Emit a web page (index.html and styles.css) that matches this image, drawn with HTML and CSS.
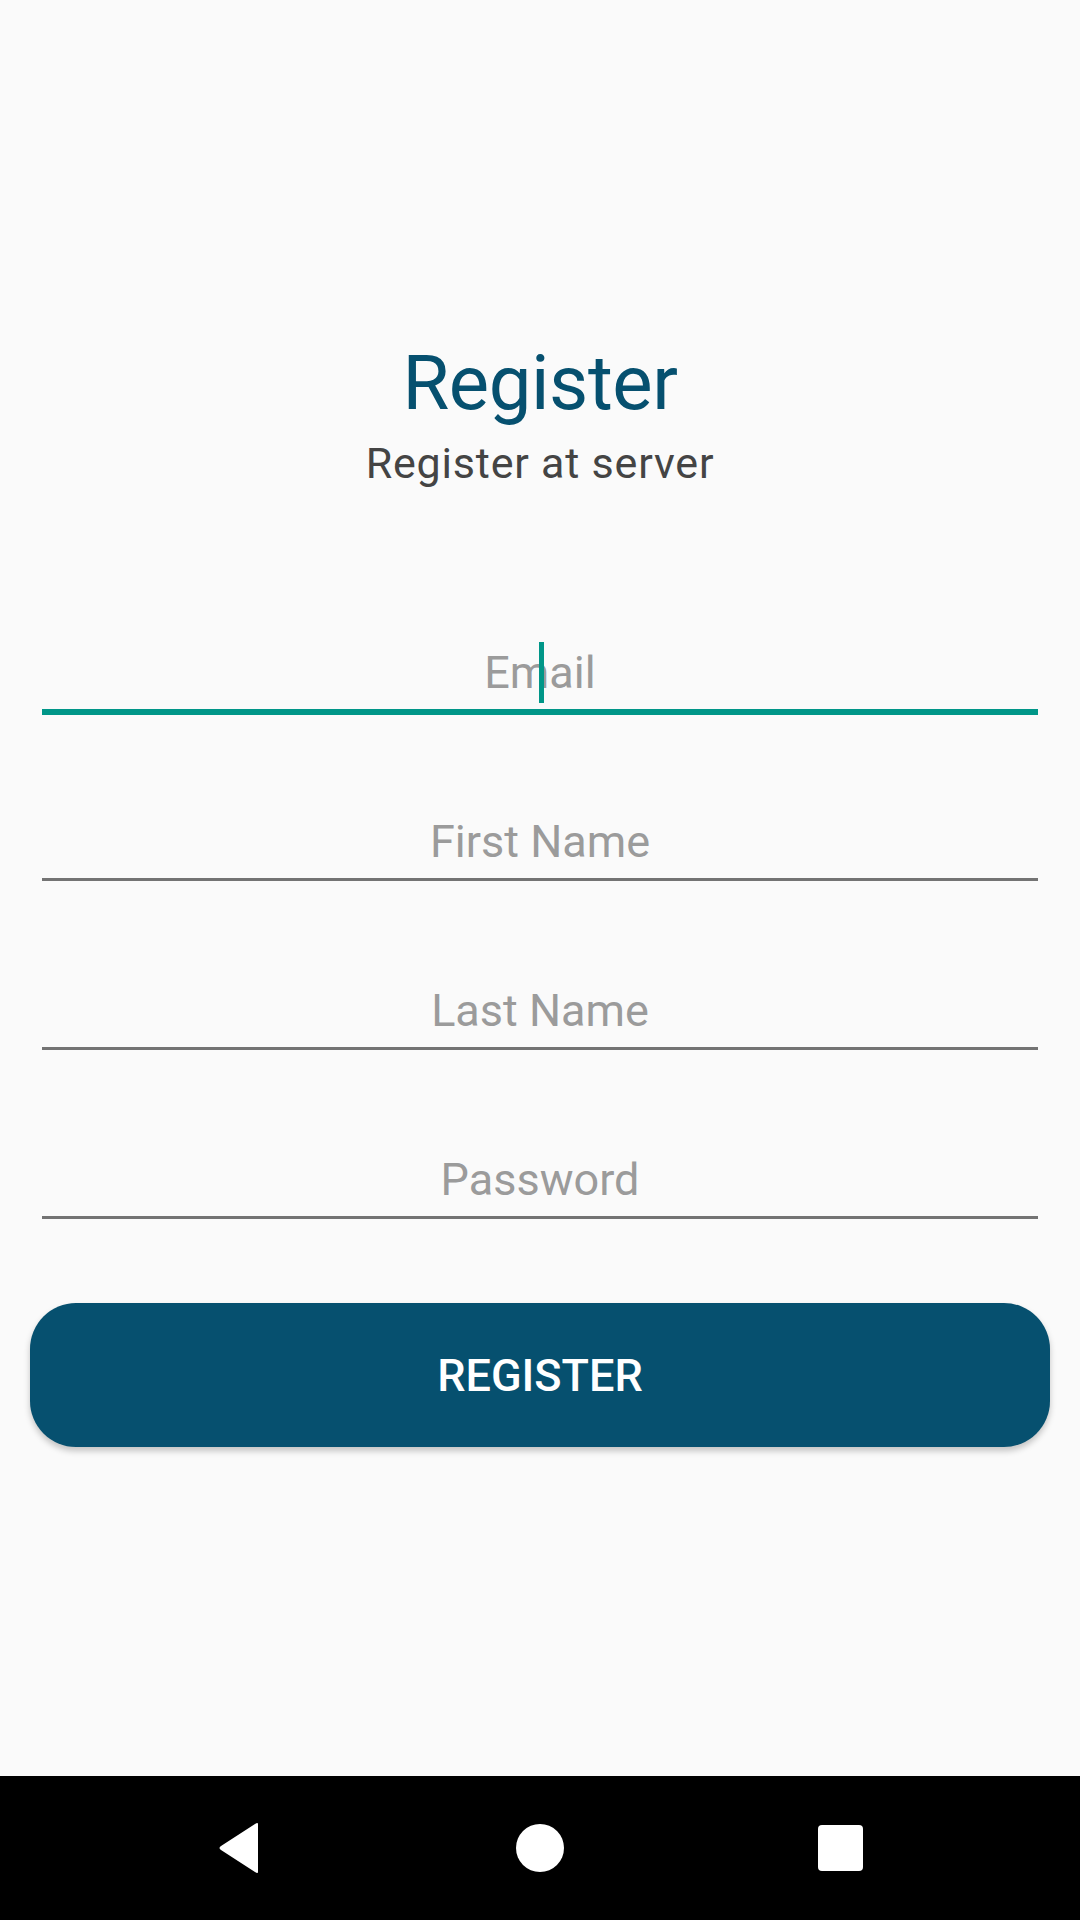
FILE: index.html
```html
<!DOCTYPE html>
<html lang="en">
<head>
<meta charset="utf-8">
<title>Register</title>
<link rel="stylesheet" href="styles.css">
</head>
<body>
<div class="app">
  <main class="screen">
    <header class="head">
      <h1 class="title">Register</h1>
      <p class="subtitle">Register at server</p>
    </header>
    <form class="form">
      <div class="field">
        <div class="input">Email<span class="caret"></span></div>
        <div class="line focused"></div>
      </div>
      <div class="field">
        <div class="input">First Name</div>
        <div class="line"></div>
      </div>
      <div class="field">
        <div class="input">Last Name</div>
        <div class="line"></div>
      </div>
      <div class="field">
        <div class="input">Password</div>
        <div class="line"></div>
      </div>
    </form>
    <button class="btn" type="button">REGISTER</button>
  </main>
  <nav class="navbar">
    <div class="nav-slot">
      <svg width="44" height="52" viewBox="0 0 44 52"><path d="M40 2 L40 50 Q40 52 37 50 L3 28 Q0 26 3 24 L37 2 Q40 0 40 2 Z" fill="#fff"/></svg>
    </div>
    <div class="nav-slot">
      <span class="home"></span>
    </div>
    <div class="nav-slot">
      <span class="recent"></span>
    </div>
  </nav>
</div>
</body>
</html>
```
FILE: styles.css
```css
html, body {
  margin: 0;
  padding: 0;
}
body {
  background: #fafafa;
  font-family: Roboto, "Noto Sans", sans-serif;
}
.app {
  width: 1080px;
  height: 1920px;
  display: flex;
  flex-direction: column;
}
.screen {
  height: 1776px;
  display: flex;
  flex-direction: column;
  padding-top: 337px;
  box-sizing: border-box;
}
.head {
  text-align: center;
}
.title {
  margin: 0;
  font-weight: 400;
  font-size: 76px;
  line-height: 92px;
  letter-spacing: -0.4px;
  color: #06506f;
}
.subtitle {
  margin: 9px 0 0;
  font-size: 43px;
  line-height: 50px;
  letter-spacing: 0.8px;
  color: #444444;
}
.form {
  margin: 157px 42px 0;
  display: flex;
  flex-direction: column;
  gap: 102px;
}
.field {
  height: 67px;
  display: flex;
  flex-direction: column;
}
.input {
  position: relative;
  font-size: 45px;
  line-height: 56px;
  padding-bottom: 8px;
  text-align: center;
  color: #9b9b9b;
}
.caret {
  position: absolute;
  left: 497px;
  top: -3px;
  width: 5px;
  height: 61px;
  background: #009688;
}
.line {
  height: 3px;
  background: #737373;
  flex: none;
}
.line.focused {
  height: 6px;
  background: #009688;
}
.btn {
  margin: 84px 30px 0;
  height: 144px;
  border: none;
  border-radius: 46px;
  background: #06506f;
  color: #ffffff;
  font-family: Roboto, "Noto Sans", sans-serif;
  font-weight: 500;
  font-size: 45px;
  box-shadow: 0 4px 6px rgba(0, 0, 0, 0.22);
  padding: 0;
}
.navbar {
  height: 144px;
  background: #000;
  display: flex;
  justify-content: center;
  align-items: center;
  gap: 240px;
}
.nav-slot {
  width: 60px;
  height: 60px;
  display: flex;
  align-items: center;
  justify-content: center;
}
.home {
  width: 48px;
  height: 48px;
  border-radius: 50%;
  background: #fff;
}
.recent {
  width: 45px;
  height: 46px;
  border-radius: 4px;
  background: #fff;
}
```
